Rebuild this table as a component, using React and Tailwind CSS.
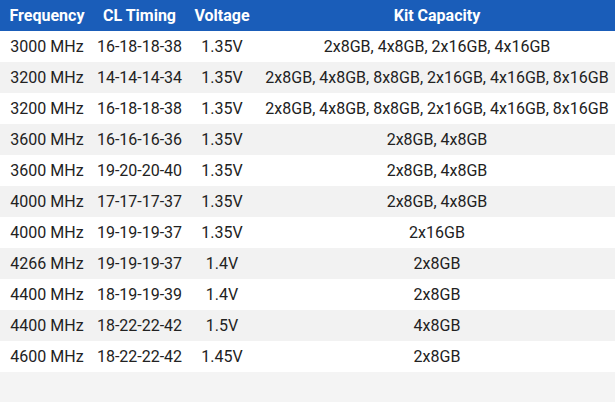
import React from "react";

const rows = [
  ["3000 MHz", "16-18-18-38", "1.35V", "2x8GB, 4x8GB, 2x16GB, 4x16GB"],
  ["3200 MHz", "14-14-14-34", "1.35V", "2x8GB, 4x8GB, 8x8GB, 2x16GB, 4x16GB, 8x16GB"],
  ["3200 MHz", "16-18-18-38", "1.35V", "2x8GB, 4x8GB, 8x8GB, 2x16GB, 4x16GB, 8x16GB"],
  ["3600 MHz", "16-16-16-36", "1.35V", "2x8GB, 4x8GB"],
  ["3600 MHz", "19-20-20-40", "1.35V", "2x8GB, 4x8GB"],
  ["4000 MHz", "17-17-17-37", "1.35V", "2x8GB, 4x8GB"],
  ["4000 MHz", "19-19-19-37", "1.35V", "2x16GB"],
  ["4266 MHz", "19-19-19-37", "1.4V", "2x8GB"],
  ["4400 MHz", "18-19-19-39", "1.4V", "2x8GB"],
  ["4400 MHz", "18-22-22-42", "1.5V", "4x8GB"],
  ["4600 MHz", "18-22-22-42", "1.45V", "2x8GB"],
];

export default function App() {
  return (
    <div className="min-h-[402px] bg-[#f4f4f4] font-['Roboto',sans-serif]">
      <table className="w-[615px] table-fixed border-collapse text-[16px] text-[#222]">
        <colgroup>
          <col className="w-[94px]" />
          <col className="w-[91px]" />
          <col className="w-[74px]" />
          <col className="w-[356px]" />
        </colgroup>
        <thead>
          <tr className="h-[31px] bg-[#1a5db9] text-white font-bold">
            <th className="p-0 text-center">Frequency</th>
            <th className="p-0 text-center">CL Timing</th>
            <th className="p-0 text-center">Voltage</th>
            <th className="p-0 text-center">Kit Capacity</th>
          </tr>
        </thead>
        <tbody>
          {rows.map((r, i) => (
            <tr
              key={i}
              className={
                "h-[31px] " + (i % 2 === 0 ? "bg-white" : "bg-[#f2f2f2]")
              }
            >
              {r.map((c, j) => (
                <td key={j} className="p-0 text-center whitespace-nowrap">
                  {c}
                </td>
              ))}
            </tr>
          ))}
        </tbody>
      </table>
    </div>
  );
}
